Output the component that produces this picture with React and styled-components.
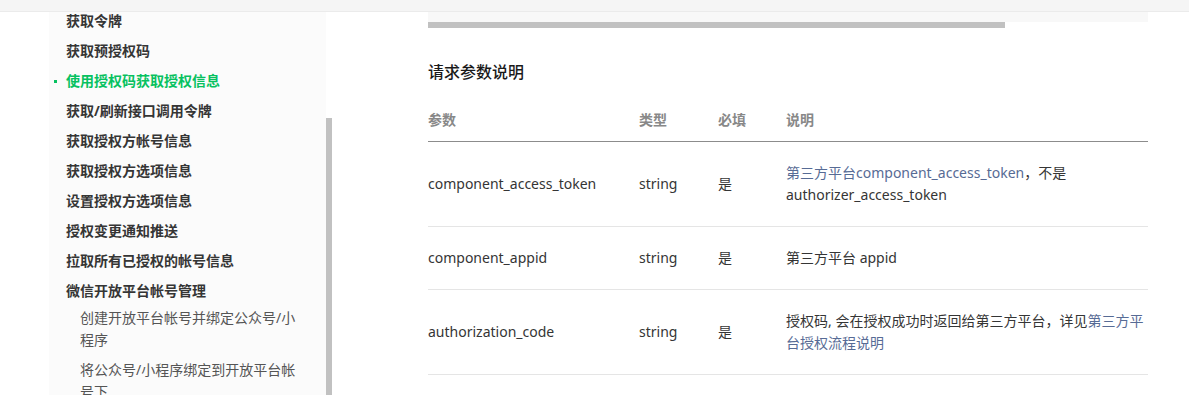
import React from "react";
import styled, { createGlobalStyle } from "styled-components";

const GlobalStyle = createGlobalStyle`
	html, body {
		margin: 0;
		padding: 0;
		background: #fff;
		font-family: "Noto Sans", "Noto Sans CJK SC", sans-serif;
		font-size: 14px;
		color: #353535;
	}
	#root {
		height: 395px;
		overflow: hidden;
	}
`;

const TopBar = styled.div`
	height: 11px;
	background: #f5f5f5;
	border-bottom: 1px solid #ebebeb;
`;

const Layout = styled.div`
	display: flex;
	padding-left: 49px;
	height: 383px;
	overflow: hidden;
`;

/* left menu column */
const Sidebar = styled.nav`
	width: 277px;
	background: #fbfbfb;
	overflow: hidden;
	box-sizing: border-box;
	padding-right: 20px;
`;

const MenuList = styled.ul`
	list-style: none;
	margin: -6px 0 0;
	padding: 0;
`;

const MenuItem = styled.li`
	position: relative;
	padding-left: 17px;
	line-height: 30px;
	font-weight: 700;
	color: ${(p) => (p.active ? "#07c160" : "#353535")};

	/* green dot before the current page */
	&::before {
		content: "";
		display: ${(p) => (p.active ? "block" : "none")};
		position: absolute;
		left: 5px;
		top: 14px;
		width: 3px;
		height: 3px;
		background: #07c160;
	}
`;

const SubList = styled.ul`
	list-style: none;
	margin: -3px 0 0;
	padding: 0;
`;

const SubItem = styled.li`
	padding: 4px 0 4px 14px;
	line-height: 22px;
	font-weight: 400;
	color: #555;
`;

const ScrollTrack = styled.div`
	width: 6px;
	display: flex;
	flex-direction: column;
`;

const ScrollThumb = styled.div`
	margin-top: 106px;
	flex: 1;
	background: #c1c1c1;
`;

const Main = styled.main`
	margin-left: 96px;
	width: 720px;
`;

/* bottom of the code sample above, with its horizontal scrollbar */
const CodeTail = styled.div`
	height: 10px;
	background: #f8f8f8;
`;

const CodeScroll = styled.div`
	height: 6px;
	width: 577px;
	background: #c1c1c1;
`;

const Heading = styled.h3`
	margin: 32px 0 15px;
	font-size: 16px;
	line-height: 24px;
	font-weight: 500;
	color: #1a1a1a;
`;

const Row = styled.div`
	display: grid;
	grid-template-columns: 211px 79px 68px 362px;
	align-items: center;
	padding: ${(p) => (p.head ? "10px 0" : "20px 0")};
	line-height: 22px;
	border-bottom: 1px solid ${(p) => (p.head ? "#8c8c8c" : "#e5e5e5")};
	font-weight: ${(p) => (p.head ? 700 : 400)};
	color: ${(p) => (p.head ? "#888" : "#353535")};
`;

const Desc = styled.span`
	margin-right: -4px;
`;

const Link = styled.span`
	color: #576b95;
`;

const menu = [
	"获取令牌",
	"获取预授权码",
	"使用授权码获取授权信息",
	"获取/刷新接口调用令牌",
	"获取授权方帐号信息",
	"获取授权方选项信息",
	"设置授权方选项信息",
	"授权变更通知推送",
	"拉取所有已授权的帐号信息",
];

const subMenu = ["创建开放平台帐号并绑定公众号/小程序", "将公众号/小程序绑定到开放平台帐号下"];

const params = [
	{
		name: "component_access_token",
		desc: (
			<>
				<Link>第三方平台component_access_token</Link>，不是 authorizer_access_token
			</>
		),
	},
	{ name: "component_appid", desc: "第三方平台 appid" },
	{
		name: "authorization_code",
		desc: (
			<>
				授权码, 会在授权成功时返回给第三方平台，详见<Link>第三方平台授权流程说明</Link>
			</>
		),
	},
];

export default function App() {
	return (
		<>
			<GlobalStyle />
			<TopBar />
			<Layout>
				<Sidebar>
					<MenuList>
						{menu.map((item, i) => (
							<MenuItem key={item} active={i === 2}>
								{item}
							</MenuItem>
						))}
						<MenuItem>
							微信开放平台帐号管理
							<SubList>
								{subMenu.map((s) => (
									<SubItem key={s}>{s}</SubItem>
								))}
							</SubList>
						</MenuItem>
					</MenuList>
				</Sidebar>
				<ScrollTrack>
					<ScrollThumb />
				</ScrollTrack>
				<Main>
					<CodeTail />
					<CodeScroll />
					<Heading>请求参数说明</Heading>
					<Row head>
						<span>参数</span>
						<span>类型</span>
						<span>必填</span>
						<span>说明</span>
					</Row>
					{params.map((p) => (
						<Row key={p.name}>
							<span>{p.name}</span>
							<span>string</span>
							<span>是</span>
							<Desc>{p.desc}</Desc>
						</Row>
					))}
				</Main>
			</Layout>
		</>
	);
}
